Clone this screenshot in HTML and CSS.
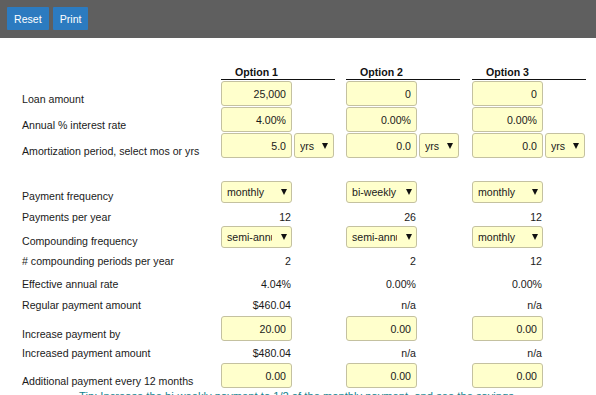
FILE: index.html
```html
<!DOCTYPE html>
<html lang="en">
<head>
  <meta charset="UTF-8">
  <meta name="viewport" content="width=device-width, initial-scale=1.0">
  <title>Loan Payment Calculator</title>
  <link rel="stylesheet" href="styles.css">
</head>
<body>
  <div class="toolbar">
    <button type="button" class="btn">Reset</button>
    <button type="button" class="btn">Print</button>
  </div>

  <form class="calc">
    <div class="grid">
      <!-- Column headings -->
      <div></div>
      <div class="opt-head"><span>Option 1</span></div>
      <div class="opt-head"><span>Option 2</span></div>
      <div class="opt-head"><span>Option 3</span></div>

      <!-- Loan -->
      <div class="lbl">Loan amount</div>
      <div class="cell"><input class="num" type="text" value="25,000"></div>
      <div class="cell"><input class="num" type="text" value="0"></div>
      <div class="cell"><input class="num" type="text" value="0"></div>

      <div class="lbl">Annual % interest rate</div>
      <div class="cell"><input class="num" type="text" value="4.00%"></div>
      <div class="cell"><input class="num" type="text" value="0.00%"></div>
      <div class="cell"><input class="num" type="text" value="0.00%"></div>

      <div class="lbl">Amortization period, select mos or yrs</div>
      <div class="cell">
        <input class="num" type="text" value="5.0">
        <span class="pick pick-sm"><select><option>yrs</option><option>mos</option></select></span>
      </div>
      <div class="cell">
        <input class="num" type="text" value="0.0">
        <span class="pick pick-sm"><select><option>yrs</option><option>mos</option></select></span>
      </div>
      <div class="cell">
        <input class="num" type="text" value="0.0">
        <span class="pick pick-sm"><select><option>yrs</option><option>mos</option></select></span>
      </div>

      <!-- Payments -->
      <div class="lbl">Payment frequency</div>
      <div class="cell"><span class="pick"><select><option>monthly</option><option>bi-weekly</option></select></span></div>
      <div class="cell"><span class="pick"><select><option>bi-weekly</option><option>monthly</option></select></span></div>
      <div class="cell"><span class="pick"><select><option>monthly</option><option>bi-weekly</option></select></span></div>

      <div class="lbl">Payments per year</div>
      <div class="cell"><span class="val">12</span></div>
      <div class="cell"><span class="val">26</span></div>
      <div class="cell"><span class="val">12</span></div>

      <div class="lbl">Compounding frequency</div>
      <div class="cell"><span class="pick"><select><option>semi-annually</option><option>monthly</option></select></span></div>
      <div class="cell"><span class="pick"><select><option>semi-annually</option><option>monthly</option></select></span></div>
      <div class="cell"><span class="pick"><select><option>monthly</option><option>semi-annually</option></select></span></div>

      <div class="lbl"># compounding periods per year</div>
      <div class="cell"><span class="val">2</span></div>
      <div class="cell"><span class="val">2</span></div>
      <div class="cell"><span class="val">12</span></div>

      <div class="lbl">Effective annual rate</div>
      <div class="cell"><span class="val">4.04%</span></div>
      <div class="cell"><span class="val">0.00%</span></div>
      <div class="cell"><span class="val">0.00%</span></div>

      <div class="lbl">Regular payment amount</div>
      <div class="cell"><span class="val">$460.04</span></div>
      <div class="cell"><span class="val">n/a</span></div>
      <div class="cell"><span class="val">n/a</span></div>

      <div class="lbl">Increase payment by</div>
      <div class="cell"><input class="num" type="text" value="20.00"></div>
      <div class="cell"><input class="num" type="text" value="0.00"></div>
      <div class="cell"><input class="num" type="text" value="0.00"></div>

      <div class="lbl">Increased payment amount</div>
      <div class="cell"><span class="val">$480.04</span></div>
      <div class="cell"><span class="val">n/a</span></div>
      <div class="cell"><span class="val">n/a</span></div>

      <div class="lbl">Additional payment every 12 months</div>
      <div class="cell"><input class="num" type="text" value="0.00"></div>
      <div class="cell"><input class="num" type="text" value="0.00"></div>
      <div class="cell"><input class="num" type="text" value="0.00"></div>
    </div>

    <p class="tip">Tip: Increase the bi-weekly payment to 1/2 of the monthly payment, and see the savings.</p>
  </form>
</body>
</html>
```

FILE: styles.css
```css
body {
  margin: 0;
  font-family: "Liberation Sans", Arial, sans-serif;
  font-size: 10.6px;
  color: #1a1a1a;
  background: #fff;
}

.toolbar {
  display: flex;
  gap: 4px;
  height: 38px;
  padding: 7px;
  box-sizing: border-box;
  background-color: #5f5f5f;
}

.btn {
  height: 23px;
  padding: 0 7px;
  border: none;
  border-radius: 1px;
  background-color: #2c7bc0;
  color: #fff;
  font-family: inherit;
  font-size: 10.6px;
  cursor: pointer;
}

.calc {
  margin: 28px 0 0;
}

.grid {
  display: grid;
  grid-template-columns: 199px 125px 126px 125px;
  grid-template-rows: 14px 26px 26px 26px 45px 21px 24px 20px 23px 21px 29px 19px 28px;
  padding-left: 22px;
  align-items: end;
  line-height: 13px;
}

.opt-head {
  width: 114px;
  border-bottom: 1px solid #111;
  font-weight: bold;
  color: #111;
}

.opt-head span {
  display: block;
  width: 71px;
  text-align: center;
}

.lbl {
  white-space: nowrap;
}

.cell {
  display: flex;
  align-items: flex-end;
  gap: 2px;
}

.num {
  width: 71px;
  height: 25px;
  box-sizing: border-box;
  margin: 0;
  padding: 0 5px;
  border: 1px solid #c4c1a0;
  border-radius: 3px;
  background-color: #ffffcc;
  color: #1a1a1a;
  font-family: inherit;
  font-size: 10.6px;
  text-align: right;
}

.val {
  display: block;
  width: 71px;
  padding-right: 1px;
  box-sizing: border-box;
  text-align: right;
}

.pick {
  position: relative;
  display: block;
  width: 71px;
}

.pick select {
  appearance: none;
  -webkit-appearance: none;
  display: block;
  width: 100%;
  height: 22px;
  margin: 0;
  padding: 0 19px 0 5px;
  border: 1px solid #c4c1a0;
  border-radius: 3px;
  background-color: #ffffcc;
  color: #1a1a1a;
  font-family: inherit;
  font-size: 10.6px;
}

.pick::after {
  content: "";
  position: absolute;
  right: 5px;
  top: 8px;
  border-left: 3px solid transparent;
  border-right: 3px solid transparent;
  border-top: 6px solid #111;
  pointer-events: none;
}

.pick-sm {
  width: 40px;
}

.pick-sm select {
  height: 25px;
  padding-left: 5px;
  padding-right: 12px;
}

.pick-sm::after {
  right: 6px;
  top: 10px;
}

.tip {
  margin: 2px 0 0;
  font-size: 11.2px;
  line-height: 13px;
  text-align: center;
  color: #16838f;
}
```
